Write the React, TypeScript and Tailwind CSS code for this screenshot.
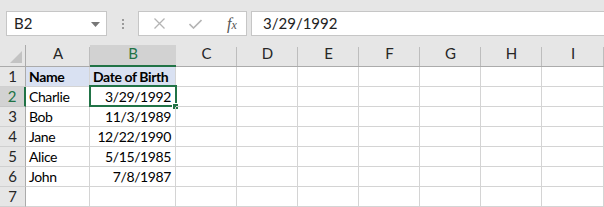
import React from "react";

const columns = ["A", "B", "C", "D", "E", "F", "G", "H", "I"];

const rows: string[][] = [
  ["Name", "Date of Birth"],
  ["Charlie", "3/29/1992"],
  ["Bob", "11/3/1989"],
  ["Jane", "12/22/1990"],
  ["Alice", "5/15/1985"],
  ["John", "7/8/1987"],
  [],
];

const font = { fontFamily: "Lato, 'Liberation Sans', sans-serif" };

function FormulaBar() {
  return (
    <div className="flex h-[45px] items-start bg-[#e6e6e6] pt-[11px] pl-[6px]">
      {/* name box */}
      <div className="relative flex h-[25px] w-[101px] items-center border border-[#c6c6c6] bg-white pl-[7px] text-[15px] text-[#222]">
        B2
        <svg className="absolute right-[6px] top-[10px]" width="9" height="5" viewBox="0 0 9 5">
          <path d="M0 0 L9 0 L4.5 5 Z" fill="#777" />
        </svg>
      </div>
      {/* grip dots */}
      <div className="flex w-[31px] flex-col items-center gap-[2px] pt-[8px]">
        <span className="h-[2px] w-[2px] bg-[#9a9a9a]" />
        <span className="h-[2px] w-[2px] bg-[#9a9a9a]" />
        <span className="h-[2px] w-[2px] bg-[#9a9a9a]" />
      </div>
      {/* cancel / enter / fx */}
      <div className="flex h-[25px] w-[109px] items-center border border-[#c6c6c6] bg-white">
        <svg className="ml-[15px]" width="11" height="11" viewBox="0 0 11 11">
          <path d="M0.5 0.5 L10.5 10.5 M10.5 0.5 L0.5 10.5" stroke="#b4b4b4" strokeWidth="1.3" />
        </svg>
        <svg className="ml-[24px]" width="13" height="10" viewBox="0 0 13 10">
          <path d="M0.5 5 L4.5 9 L12.5 1" stroke="#b4b4b4" strokeWidth="1.6" fill="none" />
        </svg>
        <span
          className="ml-[25px] text-[16px] italic text-[#555]"
          style={{ fontFamily: "'Liberation Serif', serif" }}
        >
          f<span className="text-[12px]">x</span>
        </span>
      </div>
      <div className="ml-[4px] flex h-[25px] flex-1 items-center border border-r-0 border-[#c6c6c6] bg-white pl-[11px] text-[15px] text-[#222]">
        3/29/1992
      </div>
    </div>
  );
}

export default function App() {
  const colTemplate = "grid-cols-[26px_64px_86px_61px_61px_61px_61px_61px_61px_62px]";
  return (
    <div className="h-[207px] w-[604px] overflow-hidden bg-white" style={font}>
      <FormulaBar />
      <div className={`grid ${colTemplate}`}>
        {/* corner */}
        <div className="relative h-[22px] border-b border-r border-[#ababab] bg-[#e6e6e6]">
          <svg className="absolute bottom-[3px] right-[3px]" width="12" height="12" viewBox="0 0 12 12">
            <path d="M12 0 L12 12 L0 12 Z" fill="#c3c3c3" />
          </svg>
        </div>
        {columns.map((c) => {
          const active = c === "B";
          return (
            <div
              key={c}
              className={
                active
                  ? "flex h-[22px] items-end justify-center border-b-2 border-[#217346] bg-[#d2d2d2] pb-[1px] text-[15px] text-[#217346]"
                  : "relative flex h-[22px] items-end justify-center border-b border-[#ababab] bg-[#e6e6e6] pb-[2px] text-[15px] text-[#262626]"
              }
            >
              {!active && <span className="absolute right-0 top-[2px] h-[19px] w-px bg-[#bdbdbd]" />}
              {c}
            </div>
          );
        })}

        {rows.map((r, i) => {
          const rowNo = i + 1;
          const activeRow = rowNo === 2;
          return (
            <React.Fragment key={rowNo}>
              <div
                className={
                  activeRow
                    ? "flex h-[20px] items-center justify-center border-b border-r-2 border-b-[#c6c6c6] border-r-[#217346] bg-[#d2d2d2] text-[15px] text-[#217346]"
                    : "flex h-[20px] items-center justify-center border-b border-r border-b-[#d0d0d0] border-r-[#ababab] bg-[#e6e6e6] text-[15px] text-[#262626]"
                }
              >
                {rowNo}
              </div>
              {columns.map((c, ci) => {
                const text = r[ci] ?? "";
                const header = rowNo === 1 && ci < 2;
                const selected = rowNo === 2 && c === "B";
                return (
                  <div
                    key={c}
                    className={`relative flex h-[20px] items-center overflow-visible whitespace-nowrap border-b border-r border-[#d4d4d4] text-[14px] tracking-[-0.4px] text-black ${
                      ci === 1 && !header ? "justify-end pr-[4px]" : "pl-[3px]"
                    } ${header ? "bg-[#d9e1f2] font-bold" : ""}`}
                  >
                    {text}
                    {selected && (
                      <>
                        <span className="pointer-events-none absolute -left-[1px] -top-[2px] h-[22px] w-[88px] border-2 border-[#217346]" />
                        <span className="absolute -bottom-[4px] -right-[4px] h-[7px] w-[7px] border border-white bg-[#217346]" />
                      </>
                    )}
                  </div>
                );
              })}
            </React.Fragment>
          );
        })}
      </div>
    </div>
  );
}
